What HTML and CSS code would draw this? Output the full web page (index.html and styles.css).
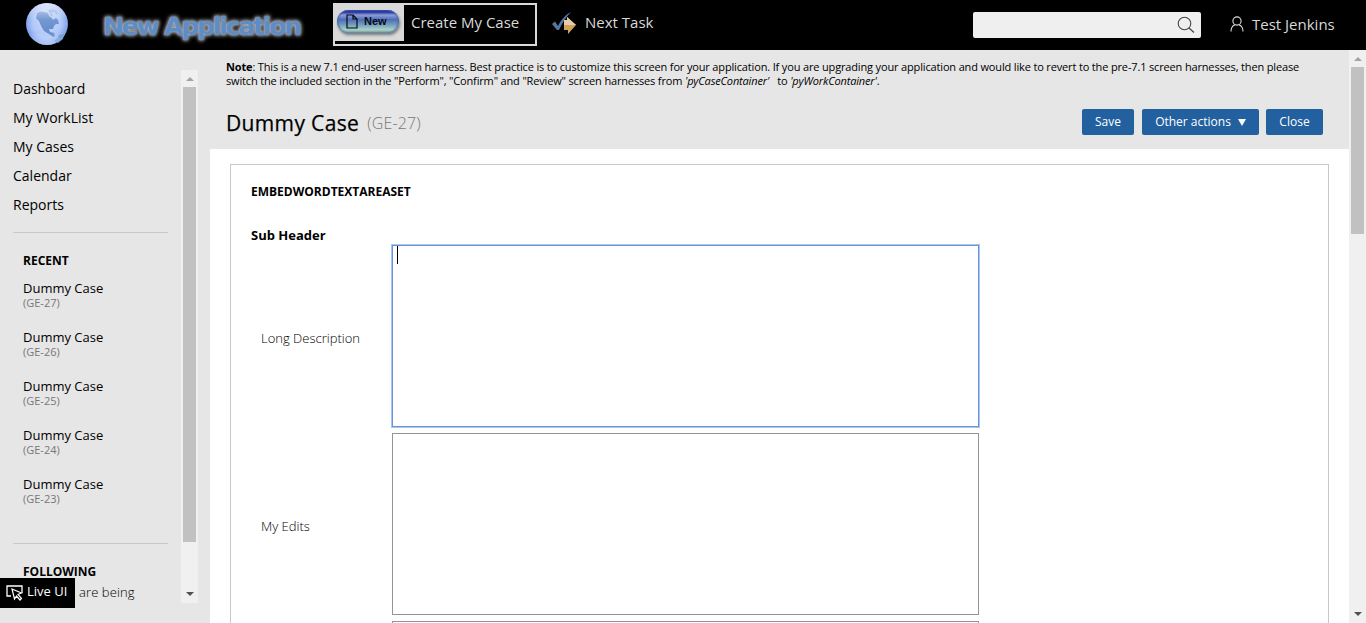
FILE: index.html
```html
<!DOCTYPE html>
<html lang="en">
<head>
<meta charset="utf-8">
<title>New Application</title>
<link rel="stylesheet" href="styles.css">
</head>
<body>
<header class="topbar">
  <svg class="globe" width="44" height="44" viewBox="0 0 44 44">
    <defs>
      <radialGradient id="ocean" cx=".5" cy=".5" r=".52">
        <stop offset="0" stop-color="#c8d8fa"/><stop offset=".65" stop-color="#acc5f8"/><stop offset=".92" stop-color="#7fa1ed"/><stop offset="1" stop-color="#6388cf"/>
      </radialGradient>
      <linearGradient id="shine" x1="0" y1="0" x2="0" y2="1">
        <stop offset="0" stop-color="#fff" stop-opacity=".75"/><stop offset=".4" stop-color="#fff" stop-opacity=".1"/><stop offset=".7" stop-color="#fff" stop-opacity="0"/><stop offset="1" stop-color="#fff" stop-opacity=".4"/>
      </linearGradient>
    </defs>
    <circle cx="22" cy="22" r="21" fill="url(#ocean)"/>
    <path d="M12 11 15 9.500 19 10 23 11 24 14 27 16 28 18 31 16 33 18 34 22 31 22 29 24 28 27 24 27 25 30 29 31 30 34 28 35 24 32 19 29 16 24 14 19 11 16Z" fill="#648dcc"/>
    <path d="M29 39 33 36 34 33 39 32 38 37 33 41Z" fill="#6b93d2"/>
    <path d="M23 8 28 6.500 32 9 33 13 29 10 25 11 28 13 26 14" fill="#7da3df"/>
    <circle cx="22" cy="22" r="21" fill="url(#shine)"/>
  </svg>
  <div class="brand">New Application</div>
  <div class="create">
    <div class="create-badge">
      <div class="pill">
        <svg width="12" height="15" viewBox="0 0 12 15"><path d="M1 1H7L11 5V14H1ZM7 1V5H11" fill="none" stroke="#050b18" stroke-width="1.200"/></svg>
        <span>New</span>
      </div>
    </div>
    <span class="create-label">Create My Case</span>
  </div>
  <svg class="next-icon" width="26" height="24" viewBox="0 0 26 24">
    <path d="M1 13 4 10.500 7 15 C10 9 14 4 20 1 C15 6 11 12 8 19 H6Z" fill="#55779f"/>
    <path d="M13 9H16V6L25 14 17 23V19H13Z" fill="#cfa358"/>
    <path d="M13 9H16V6L25 14H13Z" fill="#e4cda8"/>
  </svg>
  <span class="next-label">Next Task</span>
  <div class="search">
    <svg width="18" height="18" viewBox="0 0 18 18"><circle cx="7.500" cy="7.500" r="6.300" fill="none" stroke="#444" stroke-width="1.100"/><path d="M12 12 17 16.500" stroke="#444" stroke-width="1.200"/></svg>
  </div>
  <svg class="user-icon" width="14" height="16" viewBox="0 0 14 16"><circle cx="7" cy="5" r="4.100" fill="none" stroke="#ddd" stroke-width="1.100"/><path d="M1 15.500C1 12 3 9.500 5 8.700M13 15.500C13 12 11 9.500 9 8.700" fill="none" stroke="#ddd" stroke-width="1.100"/></svg>
  <span class="user-name">Test Jenkins</span>
</header>
<div class="body">
  <aside class="sidebar">
    <div class="side-content">
      <nav class="nav">
        <a>Dashboard</a><a>My WorkList</a><a>My Cases</a><a>Calendar</a><a>Reports</a>
      </nav>
      <section class="recent">
        <h3>RECENT</h3>
        <div class="item">Dummy Case<small>(GE-27)</small></div>
        <div class="item">Dummy Case<small>(GE-26)</small></div>
        <div class="item">Dummy Case<small>(GE-25)</small></div>
        <div class="item">Dummy Case<small>(GE-24)</small></div>
        <div class="item">Dummy Case<small>(GE-23)</small></div>
      </section>
      <section class="following">
        <h3>FOLLOWING</h3>
        <p>are being</p>
      </section>
    </div>
    <div class="scrollbar side-scroll">
      <i class="up"></i><div class="thumb"></div><i class="down"></i>
    </div>
  </aside>
  <main class="main">
    <div class="case-head">
      <p class="note"><span class="line l1"><b>Note</b>: This is a new 7.1 end-user screen harness. Best practice is to customize this screen for your application. If you are upgrading your application and would like to revert to the pre-7.1 screen harnesses, then please</span>
      <span class="line l2">switch the included section in the "Perform", "Confirm" and "Review" screen harnesses from <em>'pyCaseContainer'</em> &nbsp; to <em>'pyWorkContainer'</em>.</span></p>
      <div class="title-row">
        <h1>Dummy Case</h1><span class="case-id">(GE-27)</span>
        <div class="buttons">
          <button class="save">Save</button>
          <button class="other">Other actions<svg width="8" height="7" viewBox="0 0 8 7"><path d="M0 0H8L4 7Z" fill="#fff"/></svg></button>
          <button class="close">Close</button>
        </div>
      </div>
    </div>
    <div class="panel">
      <h2>EMBEDWORDTEXTAREASET</h2>
      <h4>Sub Header</h4>
      <div class="field"><label>Long Description</label><div class="area focus"><i class="caret"></i></div></div>
      <div class="field"><label>My Edits</label><div class="area"></div></div>
      <div class="field"><label></label><div class="area"></div></div>
    </div>
  </main>
  <div class="scrollbar page-scroll">
    <i class="up"></i><div class="thumb"></div><i class="down"></i>
  </div>
</div>
<div class="live-ui">
  <svg width="17" height="16" viewBox="0 0 17 16"><path d="M5 11H1V1H16V8" fill="none" stroke="#fff" stroke-width="1.300"/><path d="M6 4 15.500 8 12 9.500 15.500 13.500 14 15 10.500 11 8.500 14Z" fill="#000" stroke="#fff" stroke-width="1.200"/></svg>
  <span>Live UI</span>
</div>
</body>
</html>
```
FILE: styles.css
```css
* { box-sizing: border-box; }
body {
  margin: 0;
  height: 623px;
  overflow: hidden;
  background: #fff;
  color: #000;
  font: 14px/20px "Open Sans", sans-serif;
}
h1, h2, h3, h4, p { margin: 0; }
svg { display: block; flex: none; }

.topbar {
  height: 50px;
  display: flex;
  align-items: flex-start;
  background: #000;
  color: #d9d9d9;
  white-space: nowrap;
}
.globe { margin: 2px 0 0 25px; }
.brand {
  width: 230px;
  margin-left: 9px;
  padding: 10px 0 0 25px;
  font: bold 25px/34px "DejaVu Sans", sans-serif;
  letter-spacing: -2.15px;
  color: #5d8cc6;
  text-shadow: 0 0 2px #bbb, 0 0 4px #aaa, 0 0 5px #999;
}
.create {
  width: 204px;
  height: 43px;
  margin: 3px 0 0 25px;
  border: 2px solid #d9d9d9;
  display: flex;
}
.create-badge {
  width: 69px;
  height: 36px;
  padding: 5px 2px;
  background: #d9d9d9;
}
.pill {
  width: 62px;
  height: 23px;
  padding-left: 9px;
  border-radius: 12px;
  display: flex;
  align-items: center;
  gap: 6px;
  background: linear-gradient(#2433a0 0, #2a3a9e 10%, #8f9cda 22%, #4c6eb4 42%, #789fbb 65%, #a8d0c6 85%, #7aa99c 100%);
  box-shadow: 1px 2px 3px #777, inset 1px 0 2px #4869ad, inset -1px 0 2px #4869ad;
  color: #050b18;
  font: bold 11px/14px "Liberation Sans", sans-serif;
}
.pill span { padding-bottom: 1px; }
.create-label { margin-left: 7px; font-size: 15px; line-height: 35px; }
.next-icon { margin: 11px 0 0 14px; }
.next-label { margin: 12px 0 0 8px; font-size: 15px; }
.search {
  width: 228px;
  height: 26px;
  margin: 12px 0 0 auto;
  padding: 4px 6px 0 0;
  display: flex;
  justify-content: flex-end;
  border-radius: 2px;
  background: #efefef;
}
.user-icon { margin: 16px 0 0 29px; }
.user-name { width: 114px; margin: 14px 0 0 8px; font-size: 15px; }

.body { height: 573px; display: flex; }
.sidebar { width: 210px; display: flex; background: #e6e6e6; }
.side-content { width: 181px; padding: 24px 13px 0; }
.nav { height: 159px; border-bottom: 1px solid #c8c8c8; }
.nav a { display: block; height: 29px; line-height: 30px; }
.sidebar h3 { font-size: 12px; line-height: 18px; }
.recent { height: 311px; padding: 19px 10px 0; border-bottom: 1px solid #c8c8c8; }
.recent h3 { margin-bottom: 9px; }
.item { height: 49px; font-size: 13px; line-height: 19px; }
.item small { display: block; margin-top: -1px; font-size: 11px; line-height: 11px; color: #777; }
.following { padding: 19px 10px 0; }
.following p { padding: 1px 0 0 56px; font-size: 13px; font-weight: 300; letter-spacing: 0.1px; }

.scrollbar {
  width: 17px;
  display: flex;
  flex-direction: column;
  align-items: center;
  background: #f0f0f0;
}
.thumb { width: 13px; background: #c1c1c1; }
.up, .down { border: 4px solid transparent; }
.up { margin-top: 3px; margin-bottom: 6px; border-bottom-color: #a3a3a3; }
.down { margin-top: auto; border-top-color: #505050; }
.side-scroll { height: 533px; margin-top: 20px; }
.side-scroll .thumb { height: 455px; }
.side-scroll .down { margin-bottom: 3px; }
.page-scroll .thumb { height: 167px; }
.page-scroll .down { margin-bottom: 3px; }

.main { width: 1139px; overflow: hidden; }
.case-head { height: 99px; padding: 10px 26px 0 16px; background: #e6e6e6; }
.note { font-size: 11px; line-height: 14px; }
.line { display: block; white-space: nowrap; }
.l1 { letter-spacing: -0.153px; }
.l2 { letter-spacing: -0.157px; }
.title-row { display: flex; align-items: flex-start; margin-top: 21px; }
h1 { font-size: 21px; line-height: 29px; font-weight: 400; letter-spacing: 0.35px; -webkit-text-stroke: 0.25px #000; }
.case-id { margin: 0 0 0 8px; font-size: 16px; line-height: 29px; color: #777; font-weight: 300; letter-spacing: 0.15px; }
.buttons { display: flex; margin-left: auto; }
button {
  height: 26px;
  padding: 0;
  border: 0;
  border-radius: 2px;
  display: flex;
  align-items: center;
  justify-content: center;
  gap: 7px;
  background: #22609f;
  color: #fff;
  font: 12px/24px "Open Sans", sans-serif;
}
.save { width: 52px; margin-right: 8px; }
.other { width: 117px; margin-right: 7px; }
.close { width: 57px; }

.panel {
  width: 1099px;
  height: 520px;
  margin: 15px 0 0 20px;
  padding: 17px 20px 0;
  border: 1px solid #c8c8c8;
}
h2 { font-size: 12px; line-height: 20px; }
h4 { margin-top: 23px; font-size: 13px; line-height: 20px; }
.field { display: flex; align-items: center; margin-bottom: 6px; }
.field label { width: 141px; padding: 4px 0 0 10px; font-size: 13px; font-weight: 300; }
.area { width: 587px; height: 182px; border: 1px solid #949494; }
.focus { border-color: #6b92d9; box-shadow: 0 0 0 1px #a9c5f4; }
.caret { display: block; width: 1px; height: 18px; margin: 0 0 0 4px; background: #000; }

.live-ui {
  position: absolute;
  left: 0;
  top: 578px;
  width: 75px;
  height: 30px;
  padding-left: 6px;
  display: flex;
  align-items: center;
  gap: 4px;
  background: #000;
  color: #fff;
  font-size: 13px;
  white-space: nowrap;
}
.live-ui span { padding-bottom: 4px; }
```
